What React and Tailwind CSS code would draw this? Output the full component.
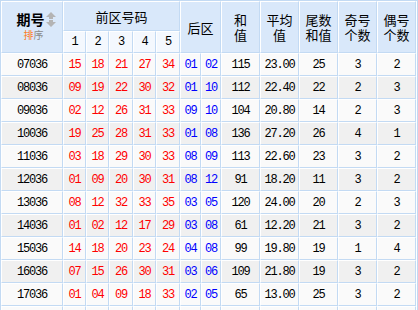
import React from "react";

const rows = [
  ["07036", ["15", "18", "21", "27", "34"], ["01", "02"], "115", "23.00", "25", "3", "2"],
  ["08036", ["09", "19", "22", "30", "32"], ["01", "10"], "112", "22.40", "22", "2", "3"],
  ["09036", ["02", "12", "26", "31", "33"], ["09", "10"], "104", "20.80", "14", "2", "3"],
  ["10036", ["19", "25", "28", "31", "33"], ["01", "08"], "136", "27.20", "26", "4", "1"],
  ["11036", ["03", "18", "29", "30", "33"], ["08", "09"], "113", "22.60", "23", "3", "2"],
  ["12036", ["01", "09", "20", "30", "31"], ["08", "12"], "91", "18.20", "11", "3", "2"],
  ["13036", ["08", "12", "32", "33", "35"], ["03", "05"], "120", "24.00", "20", "2", "3"],
  ["14036", ["01", "02", "12", "17", "29"], ["03", "08"], "61", "12.20", "21", "3", "2"],
  ["15036", ["14", "18", "20", "23", "24"], ["04", "08"], "99", "19.80", "19", "1", "4"],
  ["16036", ["07", "15", "26", "30", "31"], ["03", "06"], "109", "21.80", "19", "3", "2"],
  ["17036", ["01", "04", "09", "18", "33"], ["02", "05"], "65", "13.00", "25", "3", "2"],
];

const cell =
  "flex items-center justify-center border border-t-white border-l-white border-r-[#c3daf3] border-b-[#c3daf3]";
const head = cell + " bg-[#d9e8fa] text-[13px] leading-[15px] text-black text-center";
const mono = "font-['Liberation_Mono',monospace] text-[12px] leading-[14px] tracking-[-1.2px]";

function SortIcon() {
  return (
    <svg width="10" height="15" viewBox="0 0 10 15" className="ml-[1px]">
      <polygon points="5,0 10,5 7,5 7,7 3,7 3,5 0,5" fill="#b4b4b4" />
      <polygon points="3,8 7,8 7,10 10,10 5,15 0,10 3,10" fill="#b4b4b4" />
    </svg>
  );
}

function TwoLine({ a, b }) {
  return (
    <div className={head + " row-span-2 flex-col"}>
      <div className="h-[15px] leading-[15px] overflow-visible">{a}</div>
      <div className="h-[15px] leading-[15px] overflow-visible">{b}</div>
    </div>
  );
}

export default function App() {
  return (
    <div className="w-[418px] h-[310px] overflow-hidden bg-white font-['Noto_Sans_CJK_SC','Noto_Sans',sans-serif]">
      <div className="w-[418px] border border-[#c3daf3] bg-white pr-px">
        <div className="grid grid-cols-[62px_23px_23px_24px_23px_24px_21px_20px_39px_39px_39px_39px_39px] grid-rows-[30px_22px] auto-rows-[23px]">
          <div className={head + " row-span-2 flex-col"}>
            <div className="flex items-center pl-[8px] mt-[-2px]">
              <span className="text-[14px] font-bold leading-[16px]">期号</span>
              <SortIcon />
            </div>
            <div className="text-[10px] leading-[12px] mt-[2px] pl-[3px]">
              <span className="text-[#ff7a22]">排</span>
              <span className="text-[#8a8a8a]">序</span>
            </div>
          </div>
          <div className={head + " col-span-5"}>前区号码</div>
          <div className={head + " col-span-2 row-span-2"}>后区</div>
          <TwoLine a="和" b="值" />
          <TwoLine a="平均" b="值" />
          <TwoLine a="尾数" b="和值" />
          <TwoLine a="奇号" b="个数" />
          <TwoLine a="偶号" b="个数" />
          {["1", "2", "3", "4", "5"].map((n) => (
            <div key={n} className={cell + " bg-[#f4f8fe] text-black " + mono}>
              {n}
            </div>
          ))}
          {rows.map((r, i) => {
            const bg = i % 2 === 0 ? " bg-[#fafafa]" : " bg-[#f0f0f0]";
            return (
              <React.Fragment key={r[0]}>
                <div className={cell + bg + " text-black " + mono}>{r[0]}</div>
                {r[1].map((n, j) => (
                  <div key={"f" + j} className={cell + bg + " text-[#ff0000] " + mono}>{n}</div>
                ))}
                {r[2].map((n, j) => (
                  <div key={"b" + j} className={cell + bg + " text-[#0000ff] " + mono}>{n}</div>
                ))}
                {r.slice(3).map((v, j) => (
                  <div key={"v" + j} className={cell + bg + " text-black " + mono}>{v}</div>
                ))}
              </React.Fragment>
            );
          })}
          {Array.from({ length: 13 }).map((_, j) => (
            <div key={"e" + j} className={cell + " bg-[#fafafa]"}></div>
          ))}
        </div>
      </div>
    </div>
  );
}
